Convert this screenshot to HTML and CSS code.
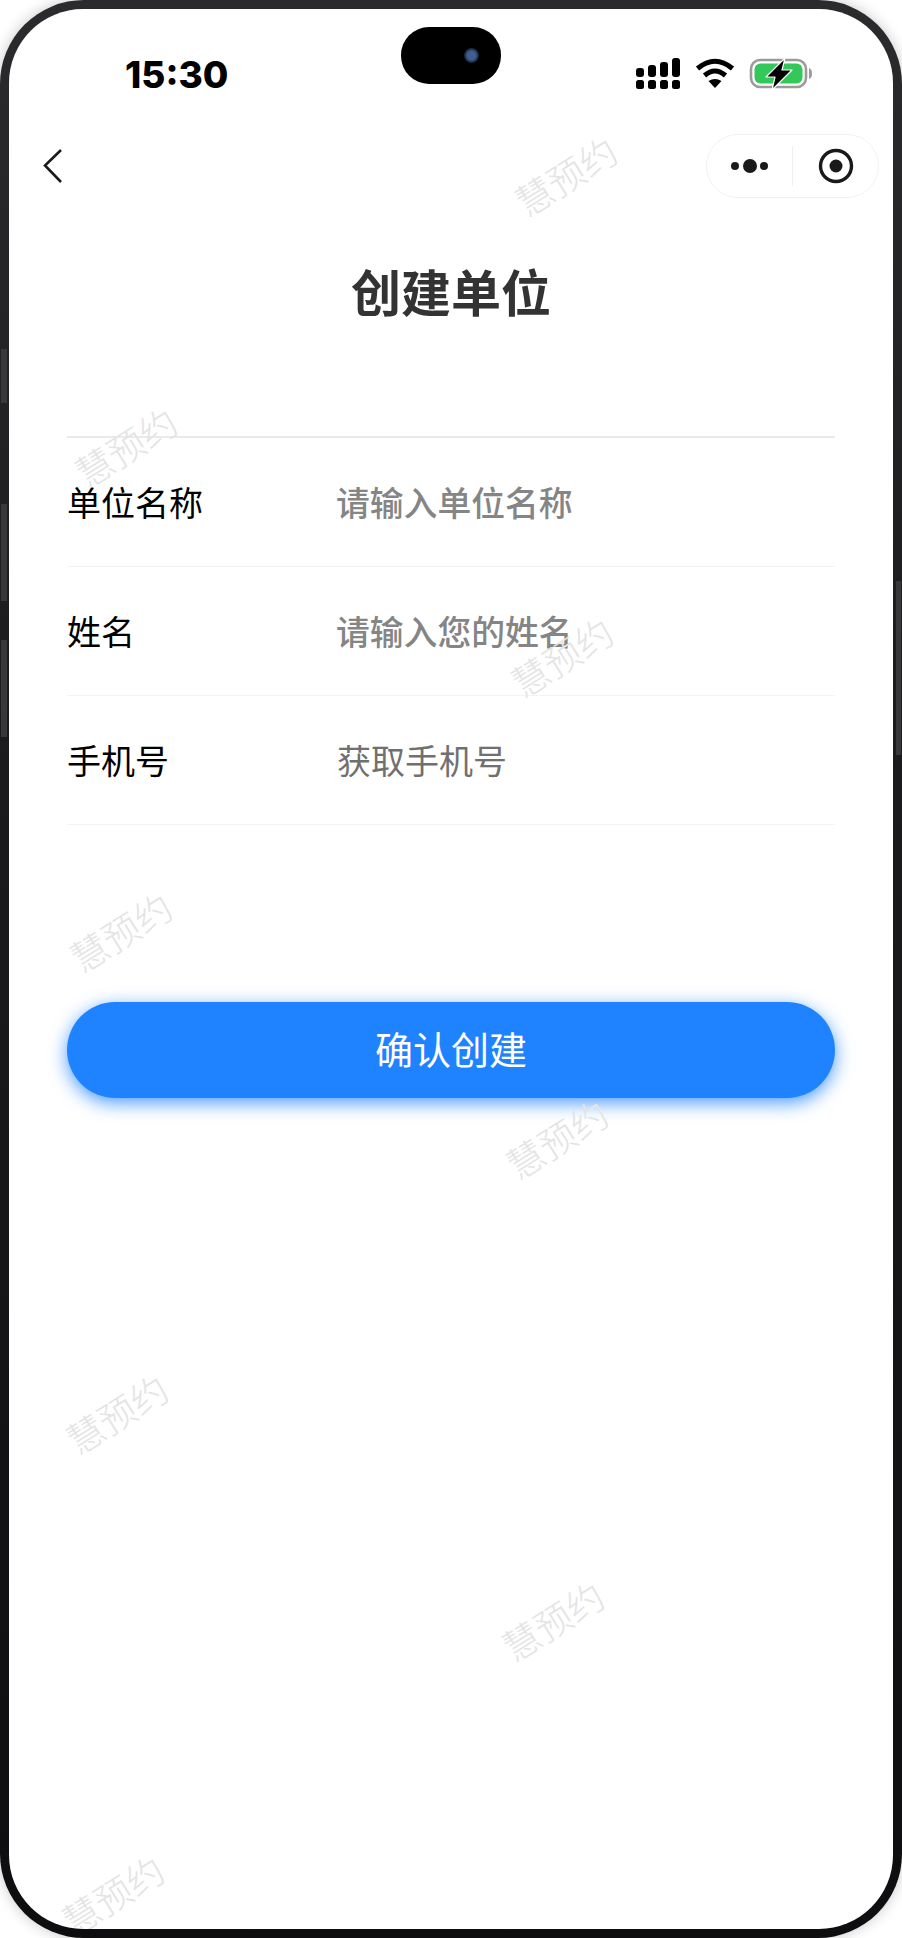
FILE: index.html
```html
<!DOCTYPE html>
<html lang="zh-CN">
<head>
  <meta charset="UTF-8">
  <title>创建单位</title>
  <link rel="stylesheet" href="styles.css">
</head>
<body>
  <div class="phone">
    <span class="side-btn side-btn-a"></span>
    <span class="side-btn side-btn-b"></span>
    <span class="side-btn side-btn-c"></span>
    <span class="side-btn side-btn-d"></span>

    <div class="screen">
      <div class="status-bar">
        <div class="time">15:30</div>
        <div class="island"><span class="camera"></span></div>
        <div class="status-icons">
          <svg class="signal" width="45" height="32" viewBox="0 0 45 32">
            <rect x="0" y="10" width="8" height="9" rx="3"/>
            <rect x="12" y="7" width="8" height="12" rx="3"/>
            <rect x="24" y="4" width="8" height="15" rx="3"/>
            <rect x="36" y="0" width="8" height="19" rx="3"/>
            <rect x="0" y="22" width="8" height="9" rx="2.5"/>
            <rect x="12" y="22" width="8" height="9" rx="2.5"/>
            <rect x="24" y="22" width="8" height="9" rx="2.5"/>
            <rect x="36" y="22" width="8" height="9" rx="2.5"/>
          </svg>
          <svg class="wifi" width="40" height="30" viewBox="0 0 40 30">
            <path d="M2.5 10.5 Q20 -4 37.5 10.5" fill="none" stroke="#000" stroke-width="5"/>
            <path d="M9.5 17.5 Q20 8.5 30.5 17.5" fill="none" stroke="#000" stroke-width="5"/>
            <path d="M13.5 23 Q20 19 26.5 23 L20 30 Z"/>
          </svg>
          <svg class="battery" width="64" height="32" viewBox="0 0 64 32">
            <rect x="2" y="2" width="55" height="27" rx="9" fill="#fff" stroke="#9b9b9b" stroke-width="2.6"/>
            <rect x="5.5" y="5.5" width="48" height="20" rx="6" fill="#34c759"/>
            <path d="M60 10 Q63 11 63 15.5 Q63 20 60 21 Z" fill="#9b9b9b"/>
            <path d="M36 0 L17 19 L26 19 L23 32 L43 12 L33 12 Z" fill="#000" stroke="#fff" stroke-width="1.2" stroke-linejoin="round"/>
          </svg>
        </div>
      </div>

      <div class="nav-bar">
        <svg class="back" width="20" height="36" viewBox="0 0 20 36">
          <path d="M18 2 L2 17.5 L18 34" fill="none" stroke="#1a1a1a" stroke-width="2.6"/>
        </svg>
        <div class="capsule">
          <div class="capsule-part">
            <svg width="42" height="16" viewBox="0 0 42 16">
              <circle cx="6" cy="8" r="4"/>
              <circle cx="21" cy="8" r="7"/>
              <circle cx="35" cy="8" r="4"/>
            </svg>
          </div>
          <span class="capsule-line"></span>
          <div class="capsule-part">
            <svg width="36" height="36" viewBox="0 0 36 36">
              <circle cx="18" cy="18" r="15.5" fill="none" stroke="#1a1a1a" stroke-width="3.4"/>
              <circle cx="18" cy="18" r="6.5" fill="#1a1a1a"/>
            </svg>
          </div>
        </div>
      </div>

      <h1 class="title">创建单位</h1>

      <div class="form">
        <div class="form-row">
          <span class="label">单位名称</span>
          <span class="placeholder">请输入单位名称</span>
        </div>
        <div class="form-row">
          <span class="label">姓名</span>
          <span class="placeholder">请输入您的姓名</span>
        </div>
        <div class="form-row">
          <span class="label">手机号</span>
          <span class="get-phone">获取手机号</span>
        </div>
      </div>

      <button class="submit-btn">确认创建</button>

      <div class="watermarks">
        <span class="wm wm-1">慧预约</span>
        <span class="wm wm-2">慧预约</span>
        <span class="wm wm-3">慧预约</span>
        <span class="wm wm-4">慧预约</span>
        <span class="wm wm-5">慧预约</span>
        <span class="wm wm-6">慧预约</span>
        <span class="wm wm-7">慧预约</span>
        <span class="wm wm-8">慧预约</span>
      </div>
    </div>
  </div>
</body>
</html>
```

FILE: styles.css
```css
* {
  box-sizing: border-box;
  margin: 0;
  padding: 0;
}

html, body {
  width: 902px;
  height: 1938px;
  overflow: hidden;
  background: #fff;
}

body {
  font-family: "Noto Sans CJK SC", "Noto Sans", sans-serif;
}

.phone {
  position: relative;
  width: 902px;
  height: 1938px;
  padding: 9px;
  border-radius: 84px;
  background: linear-gradient(180deg, #2b2b2d 0%, #1c1c1e 35%, #0e0e10 100%);
  box-shadow: 0 0 14px rgba(0, 0, 0, 0.22);
}

.side-btn {
  position: absolute;
  background: #38383a;
}

.side-btn-a {
  left: 1px;
  top: 349px;
  width: 6px;
  height: 54px;
}

.side-btn-b {
  left: 1px;
  top: 504px;
  width: 6px;
  height: 97px;
}

.side-btn-c {
  left: 1px;
  top: 640px;
  width: 6px;
  height: 97px;
}

.side-btn-d {
  right: 1px;
  top: 581px;
  width: 5px;
  height: 174px;
}

.screen {
  position: relative;
  height: 100%;
  overflow: hidden;
  background: #fff;
  border-radius: 74px;
}

/* status bar */
.status-bar {
  display: grid;
  grid-template-columns: 392px 100px 1fr;
  height: 125px;
  padding-top: 18px;
}

.time {
  margin-top: 30px;
  padding-left: 116px;
  font-family: "Inter", "Liberation Sans", sans-serif;
  font-size: 37px;
  font-weight: 800;
  line-height: 36px;
  color: #000;
}

.island {
  display: flex;
  align-items: center;
  justify-content: flex-end;
  height: 57px;
  padding-right: 22px;
  background: #000;
  border-radius: 28px;
}

.camera {
  width: 15px;
  height: 15px;
  border-radius: 50%;
  background: radial-gradient(circle, #3f5f92 0 38%, #141b2a 72%);
}

.status-icons {
  display: flex;
  align-items: flex-start;
  gap: 14px;
  margin-top: 31px;
  padding-left: 135px;
}

/* nav bar */
.nav-bar {
  display: flex;
  align-items: center;
  justify-content: space-between;
  height: 64px;
  padding: 0 14px 0 34px;
}

.capsule {
  display: flex;
  align-items: center;
  width: 173px;
  height: 64px;
  border: 1px solid #f1f1f1;
  border-radius: 32px;
}

.capsule-part {
  display: flex;
  align-items: center;
  justify-content: center;
  flex: 1;
  fill: #1a1a1a;
}

.capsule-line {
  width: 1px;
  height: 40px;
  background: #efefef;
}

/* title */
.title {
  margin-top: 67px;
  text-align: center;
  font-size: 50px;
  font-weight: 700;
  line-height: 50px;
  color: #333;
}

/* form */
.form {
  margin: 121px 58px 0;
  border-top: 2px solid #eaeaea;
}

.form-row {
  display: flex;
  align-items: center;
  height: 129px;
  padding-bottom: 2px;
  border-bottom: 1px solid #f3f3f3;
  font-size: 34px;
}

.label {
  width: 270px;
  color: #000;
}

.placeholder {
  margin-left: -1px;
  font-size: 33.8px;
  font-weight: 500;
  color: #858585;
}

.get-phone {
  color: #707070;
}

.submit-btn {
  display: block;
  width: 768px;
  height: 96px;
  margin: 177px 58px 0;
  padding-bottom: 5px;
  border: none;
  border-radius: 48px;
  background: #1f83ff;
  color: #fff;
  font-family: inherit;
  font-size: 38px;
  box-shadow: 0 5px 18px rgba(31, 131, 255, 0.8);
}

/* watermarks, scattered across the whole screen */
.watermarks {
  position: absolute;
  inset: 0;
  pointer-events: none;
}

.wm {
  position: absolute;
  width: 111px;
  font-size: 37px;
  font-weight: 300;
  line-height: 37px;
  white-space: nowrap;
  color: #e4e4e4;
  transform: rotate(-32deg);
}

.wm-1 { left: 501px; top: 148px; }
.wm-2 { left: 61px; top: 419px; }
.wm-3 { left: 497px; top: 629px; }
.wm-4 { left: 56px; top: 904px; }
.wm-5 { left: 492px; top: 1111px; }
.wm-6 { left: 52px; top: 1386px; }
.wm-7 { left: 488px; top: 1593px; }
.wm-8 { left: 48px; top: 1867px; }
```
